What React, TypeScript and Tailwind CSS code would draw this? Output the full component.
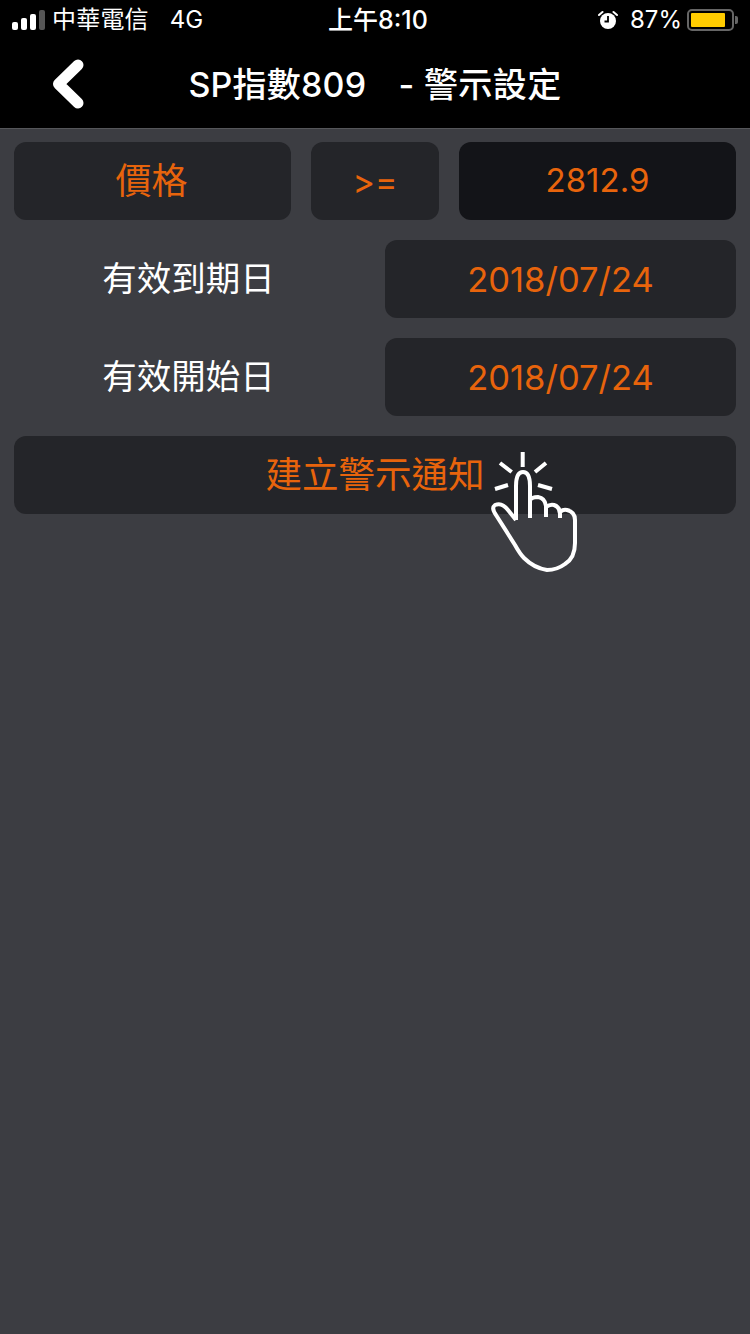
import React from "react"

const orange = "text-[#e8640c]"

function Signal() {
  return (
    <div className="flex items-end gap-[3px]">
      <div className="w-[6px] h-[8px] rounded-[2px] bg-white"></div>
      <div className="w-[6px] h-[12px] rounded-[2px] bg-white"></div>
      <div className="w-[6px] h-[16px] rounded-[2px] bg-white"></div>
      <div className="w-[6px] h-[20px] rounded-[2px] bg-[#555555]"></div>
    </div>
  )
}

function Alarm() {
  return (
    <svg width="20" height="20" viewBox="0 0 20 20">
      <circle cx="10" cy="11" r="8" fill="#fff" />
      <path d="M10 6v5.500H6.500" fill="none" stroke="#000" strokeWidth="1.800" />
      <path d="M1 5l3.500-3M19 5l-3.500-3" fill="none" stroke="#fff" strokeWidth="2" strokeLinecap="round" />
    </svg>
  )
}

function Battery() {
  return (
    <div className="flex items-center">
      <div className="w-[47px] h-[22px] rounded-[5px] border-2 border-[#666666] p-[2px]">
        <div className="w-[88%] h-full rounded-[1px] bg-[#ffcc00]"></div>
      </div>
      <div className="ml-[1px] w-[3px] h-[8px] rounded-r-[2px] bg-[#666666]"></div>
    </div>
  )
}

function Hand() {
  return (
    <svg className="absolute left-[470px] top-[311px]" width="130" height="140" viewBox="0 0 130 140" fill="none" stroke="#fff" strokeWidth="4">
      <path d="M52.700 12v15M30 23L41.700 32M76 23L65 32M25 49L38 45M82 49L68 45" />
      <path
        d="M46 80L46 46Q46 32 53 32Q60 32 60 46L60 78M60 60Q62 57 68 57Q75 58 76 66L76 77M76 67Q80 64 84 65Q90 67 90 74L90 78M90 72Q93 69 97 70Q105 72 105 80L105 103Q105 118 95 124Q87 130 77 130Q64 128 54 118Q50 114 45 105L26 75Q21 68 25 65Q32 62 38 70L46 80"
        strokeLinejoin="round"
      />
    </svg>
  )
}

export default function App() {
  return (
    <div className="w-[750px] h-[1334px] bg-[#3c3d42] font-['Inter','Noto_Sans_CJK_TC',sans-serif]">
      {/* status bar */}
      <div className="relative h-[40px] bg-black text-white text-[24px] flex items-center justify-between pl-[12px] pr-[12px]">
        <div className="flex items-center">
          <Signal />
          <span className="ml-[7px] tracking-[0.2px]">中華電信</span>
          <span className="ml-[21px]">4G</span>
        </div>
        <span className="absolute left-[328px] top-[2px] leading-[36px] text-[25px] font-medium">上午8:10</span>
        <div className="flex items-center">
          <Alarm />
          <span className="ml-[12px] mr-[5px] text-[24px]">87%</span>
          <Battery />
        </div>
      </div>

      {/* nav bar */}
      <div className="relative h-[89px] bg-black border-b border-[#55565a] flex items-center justify-center gap-[32px] text-white text-[34px] font-medium">
        <svg className="absolute left-[50px] top-[19px]" width="36" height="50" viewBox="0 0 36 50" fill="none">
          <path d="M28 6L8.500 25l19.500 19" stroke="#fff" strokeWidth="11" strokeLinecap="round" strokeLinejoin="round" />
        </svg>
        <span className="tracking-[0.2px]">SP指數809</span>
        <span className="tracking-[0.4px]">- 警示設定</span>
      </div>

      {/* form */}
      <div className="relative px-[14px] pt-[13px] flex flex-col gap-[20px]">
        <div className="flex gap-[20px] h-[78px]">
          <div className={`w-[277px] rounded-[12px] bg-[#242529] flex items-center justify-center pr-[2px] text-[36px] ${orange}`}>價格</div>
          <div className={`w-[128px] rounded-[12px] bg-[#242529] flex items-center justify-center text-[34px] ${orange}`}>&gt;=</div>
          <div className={`w-[277px] rounded-[12px] bg-[#131418] flex items-center justify-center text-[33px] ${orange}`}>2812.9</div>
        </div>
        <div className="grid grid-cols-2 gap-[20px] h-[78px]">
          <div className="flex items-center justify-center pr-[2px] text-white text-[34.500px]">有效到期日</div>
          <div className={`rounded-[12px] bg-[#242529] flex items-center justify-center pt-[1px] text-[34.500px] ${orange}`}>2018/07/24</div>
        </div>
        <div className="grid grid-cols-2 gap-[20px] h-[78px]">
          <div className="flex items-center justify-center pr-[2px] text-white text-[34.500px]">有效開始日</div>
          <div className={`rounded-[12px] bg-[#242529] flex items-center justify-center pt-[1px] text-[34.500px] ${orange}`}>2018/07/24</div>
        </div>
        <div className={`h-[78px] rounded-[12px] bg-[#242529] flex items-center justify-center text-[36.500px] ${orange}`}>建立警示通知</div>
        <Hand />
      </div>
    </div>
  )
}
